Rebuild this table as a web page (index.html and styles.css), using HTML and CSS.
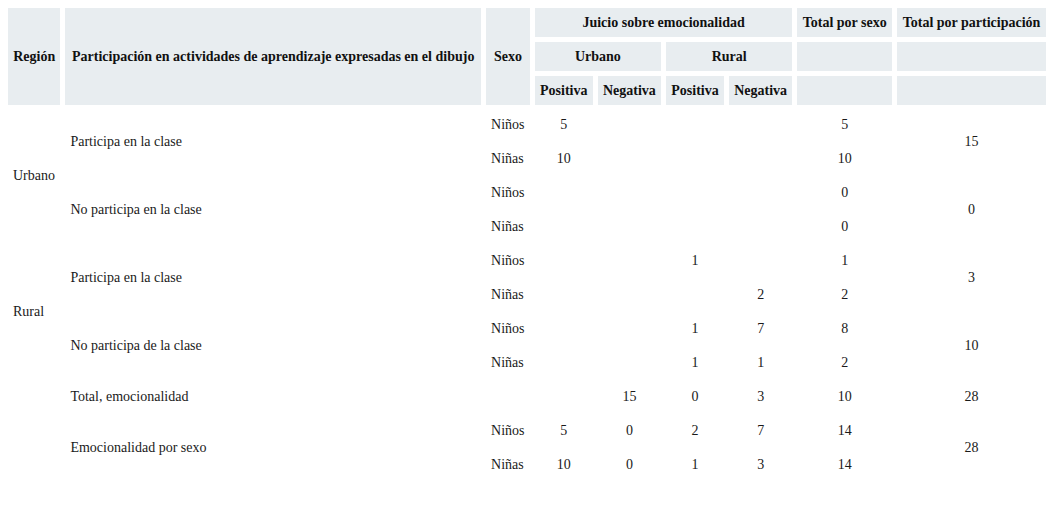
FILE: index.html
```html
<!DOCTYPE html>
<html lang="es">
<head>
<meta charset="utf-8">
<title>Tabla</title>
<link rel="stylesheet" href="styles.css">
</head>
<body>
<table class="data">
  <thead>
    <tr>
      <th rowspan="3">Región</th>
      <th rowspan="3">Participación en actividades de aprendizaje expresadas en el dibujo</th>
      <th rowspan="3">Sexo</th>
      <th colspan="4">Juicio sobre emocionalidad</th>
      <th>Total por sexo</th>
      <th>Total por participación</th>
    </tr>
    <tr>
      <th colspan="2">Urbano</th>
      <th colspan="2">Rural</th>
      <th></th>
      <th></th>
    </tr>
    <tr>
      <th>Positiva</th>
      <th>Negativa</th>
      <th>Positiva</th>
      <th>Negativa</th>
      <th></th>
      <th></th>
    </tr>
  </thead>
  <tbody>
    <tr>
      <td class="txt" rowspan="4">Urbano</td>
      <td class="txt" rowspan="2">Participa en la clase</td>
      <td class="txt">Niños</td>
      <td>5</td><td></td><td></td><td></td><td>5</td>
      <td rowspan="2">15</td>
    </tr>
    <tr>
      <td class="txt">Niñas</td>
      <td>10</td><td></td><td></td><td></td><td>10</td>
    </tr>
    <tr>
      <td class="txt" rowspan="2">No participa en la clase</td>
      <td class="txt">Niños</td>
      <td></td><td></td><td></td><td></td><td>0</td>
      <td rowspan="2">0</td>
    </tr>
    <tr>
      <td class="txt">Niñas</td>
      <td></td><td></td><td></td><td></td><td>0</td>
    </tr>
    <tr>
      <td class="txt" rowspan="4">Rural</td>
      <td class="txt" rowspan="2">Participa en la clase</td>
      <td class="txt">Niños</td>
      <td></td><td></td><td>1</td><td></td><td>1</td>
      <td rowspan="2">3</td>
    </tr>
    <tr>
      <td class="txt">Niñas</td>
      <td></td><td></td><td></td><td>2</td><td>2</td>
    </tr>
    <tr>
      <td class="txt" rowspan="2">No participa de la clase</td>
      <td class="txt">Niños</td>
      <td></td><td></td><td>1</td><td>7</td><td>8</td>
      <td rowspan="2">10</td>
    </tr>
    <tr>
      <td class="txt">Niñas</td>
      <td></td><td></td><td>1</td><td>1</td><td>2</td>
    </tr>
    <tr>
      <td class="txt"></td>
      <td class="txt">Total, emocionalidad</td>
      <td class="txt"></td>
      <td></td><td>15</td><td>0</td><td>3</td><td>10</td>
      <td>28</td>
    </tr>
    <tr>
      <td class="txt" rowspan="2"></td>
      <td class="txt" rowspan="2">Emocionalidad por sexo</td>
      <td class="txt">Niños</td>
      <td>5</td><td>0</td><td>2</td><td>7</td><td>14</td>
      <td rowspan="2">28</td>
    </tr>
    <tr>
      <td class="txt">Niñas</td>
      <td>10</td><td>0</td><td>1</td><td>3</td><td>14</td>
    </tr>
  </tbody>
</table>
</body>
</html>
```
FILE: styles.css
```css
body {
  margin: 8px;
  background: #ffffff;
  font-family: "Liberation Serif", "Times New Roman", serif;
  font-size: 14px;
  color: #1a1a1a;
}

.data {
  border-collapse: separate;
  border-spacing: 5px;
  margin: -5px;
  width: calc(100% + 10px);
}

.data th,
.data td {
  padding: 7px 5px;
  line-height: 15px;
  vertical-align: middle;
}

.data th {
  background: #e8edf0;
  font-weight: bold;
  text-align: center;
  white-space: nowrap;
  color: #111111;
}

.data td {
  text-align: center;
}

.data td.txt {
  text-align: left;
}
```
